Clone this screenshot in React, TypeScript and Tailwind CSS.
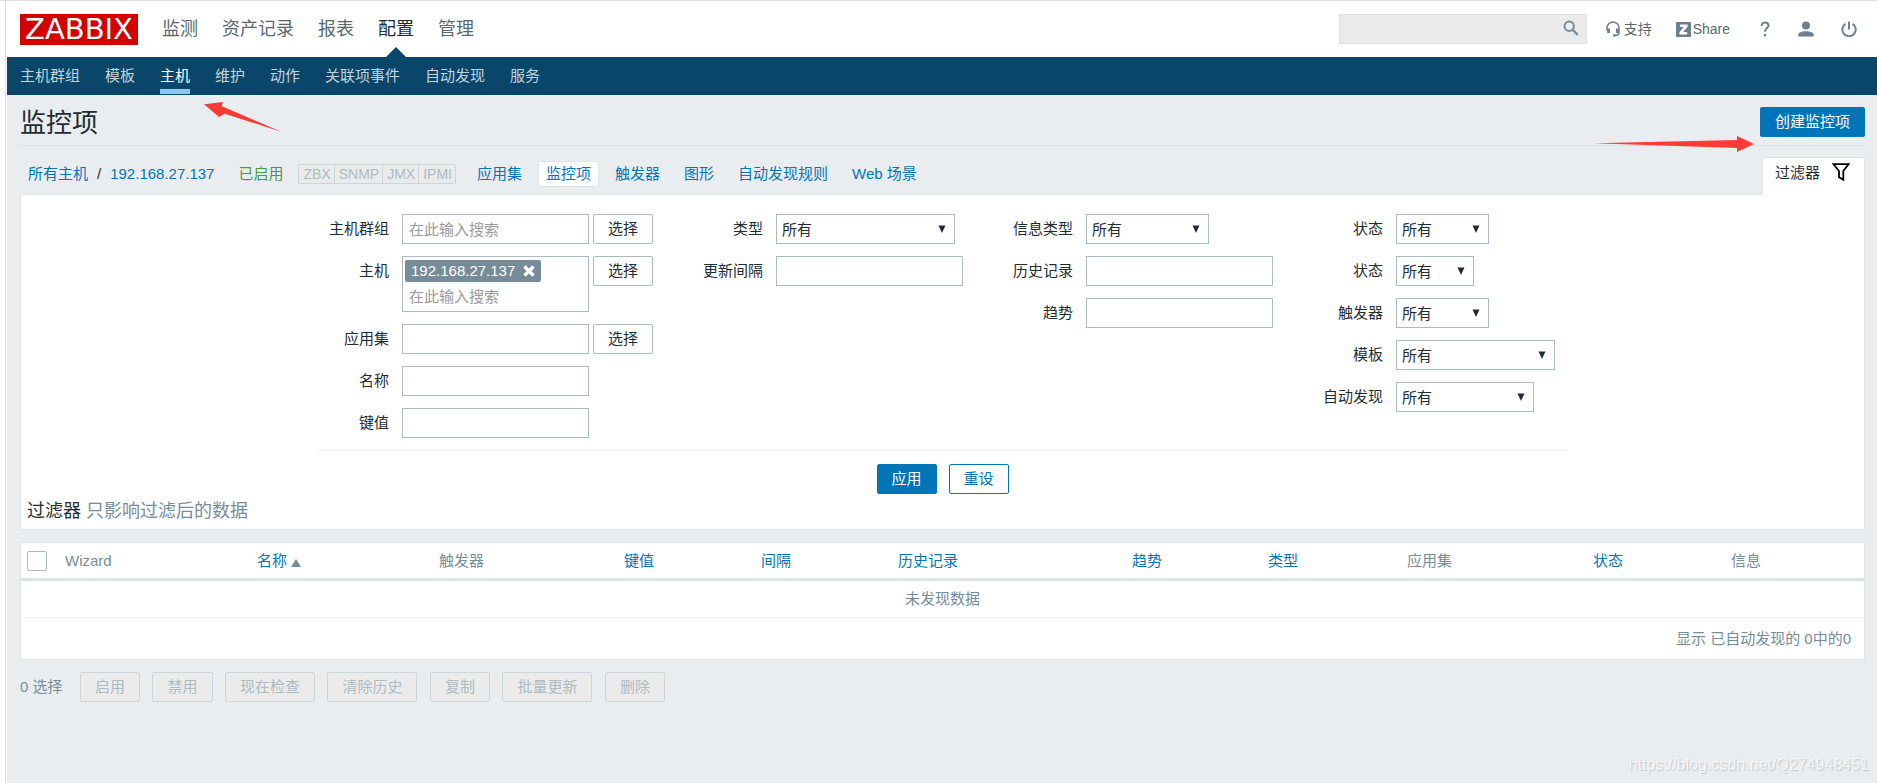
import type { ReactNode } from "react";
import { clsx } from "clsx";

const MAIN_NAV = ["监测", "资产记录", "报表", "配置", "管理"];
const SUB_NAV = ["主机群组", "模板", "主机", "维护", "动作", "关联项事件", "自动发现", "服务"];
const INTERFACES = ["ZBX", "SNMP", "JMX", "IPMI"];
const HOST_TABS = ["应用集", "监控项", "触发器", "图形", "自动发现规则", "Web 场景"];

const COLUMNS = [
  { label: "Wizard",   width: "w-[192px]" },
  { label: "名称",     width: "w-[182px]", sortable: true, sorted: true },
  { label: "触发器",   width: "w-[185px]" },
  { label: "键值",     width: "w-[137px]", sortable: true },
  { label: "间隔",     width: "w-[137px]", sortable: true },
  { label: "历史记录", width: "w-[234px]", sortable: true },
  { label: "趋势",     width: "w-[136px]", sortable: true },
  { label: "类型",     width: "w-[139px]", sortable: true },
  { label: "应用集",   width: "w-[186px]" },
  { label: "状态",     width: "w-[138px]", sortable: true },
  { label: "信息",     width: "w-[139px]" },
];

const STATE_FILTERS = [
  { id: "state",     label: "状态",     width: "w-[93px]" },
  { id: "status",    label: "状态",     width: "w-[78px]" },
  { id: "triggers",  label: "触发器",   width: "w-[93px]" },
  { id: "templates", label: "模板",     width: "w-[159px]" },
  { id: "discovery", label: "自动发现", width: "w-[138px]" },
];

const BULK_ACTIONS = ["启用", "禁用", "现在检查", "清除历史", "复制", "批量更新", "删除"];

function Field({ id, label, children }: { id: string; label: string; children: ReactNode }) {
  return (
    <div className="flex items-start">
      <label htmlFor={id} className="w-[60px] mr-[13px] text-right leading-[30px] shrink-0">{label}</label>
      {children}
    </div>
  );
}

function TextInput({ id, placeholder }: { id: string; placeholder?: string }) {
  return (
    <input
      id={id}
      type="text"
      placeholder={placeholder}
      className="w-[187px] h-[30px] px-1.5 border border-[#acbbc2] bg-white outline-none placeholder:text-[#9a9a9a]"
    />
  );
}

function Select({ id, width }: { id: string; width: string }) {
  return (
    <div className={clsx("relative", width)}>
      <select id={id} className="appearance-none block w-full h-[30px] pl-[5px] pt-[2px] border border-[#acbbc2] bg-white outline-none">
        <option>所有</option>
      </select>
      <svg viewBox="0 0 8 8" className="absolute right-[9px] top-[11px] w-2 h-2 pointer-events-none fill-[#1f2c33]">
        <path d="M0.5 0.5h7L4 8z" />
      </svg>
    </div>
  );
}

function PickButton() {
  return (
    <button type="button" className="w-[60px] h-[30px] ml-1 border border-[#acbbc2] rounded-[2px] bg-white">选择</button>
  );
}

function Header() {
  return (
    <header className="flex items-center h-14 pl-[13px] pr-5 bg-white">
      <a href="#" className="flex items-center justify-center w-[118px] h-[31px] bg-[#d40000] text-white text-[29px] leading-none font-['DejaVu_Sans',sans-serif]">
        ZABBIX
      </a>
      <nav className="flex h-full ml-6 gap-6 text-[18px]">
        {MAIN_NAV.map((item) => (
          <a
            key={item}
            href="#"
            className={clsx("relative flex items-center h-full", item === "配置" ? "text-[#1f2c33]" : "text-[#5a676e]")}
          >
            {item}
            {item === "配置" && (
              <svg viewBox="0 0 20 10" className="absolute bottom-0 left-2 w-5 h-2.5 fill-[#0a466a]">
                <path d="M0 10L10 0l10 10z" />
              </svg>
            )}
          </a>
        ))}
      </nav>

      <div className="flex items-center ml-auto text-[14px] text-[#5a676e]">
        <form className="relative w-[248px] h-[30px]">
          <input type="text" aria-label="搜索" className="w-full h-full pl-2 pr-9 border border-[#e0e0e0] bg-[#ebebeb] outline-none" />
          <button type="button" aria-label="搜索" className="absolute right-2 top-1.5 w-4 h-4">
            <svg viewBox="0 0 16 16" className="w-4 h-4 fill-none stroke-[#768d99]">
              <circle cx="6.2" cy="6.2" r="4.7" strokeWidth="2" />
              <path d="M9.8 9.8l5 5" strokeWidth="2.4" />
            </svg>
          </button>
        </form>
        <a href="#" className="flex items-center ml-[19px] gap-1">
          <svg viewBox="0 0 14 16" className="w-3.5 h-4 fill-none stroke-[#6b808b]">
            <path d="M1 9.5V7a6 6 0 0 1 12 0v4.5c0 1.8-1 2.7-3 2.9" strokeWidth="1.6" />
            <path d="M2.6 7.5v4.6M11.4 7.5v4.6" strokeWidth="2.8" />
            <circle cx="8.5" cy="14.4" r="1.4" className="fill-[#6b808b] stroke-none" />
          </svg>
          支持
        </a>
        <a href="#" className="flex items-center ml-6 gap-[2px]">
          <svg viewBox="0 0 15 15" className="w-[15px] h-[15px]">
            <rect width="15" height="15" rx="1" className="fill-[#6b808b]" />
            <path d="M4.2 2.6h7.4v2.2l-4.4 5.3h4v2.3H3.4v-2.2l4.4-5.3H4.2z" className="fill-white" />
          </svg>
          Share
        </a>
        <a href="#" aria-label="帮助" className="ml-[30px]">
          <svg viewBox="0 0 10 16" className="w-2.5 h-4 fill-none stroke-[#6b808b]">
            <path d="M1.6 5C1.6 2.7 3 1.4 5 1.4S8.5 2.6 8.5 4.6C8.5 7 5 7.3 5 10.8" strokeWidth="2" />
            <path d="M5 13v2.4" strokeWidth="2.4" />
          </svg>
        </a>
        <a href="#" aria-label="用户" className="ml-7">
          <svg viewBox="0 0 16 16" className="w-4 h-4 fill-[#6b808b]">
            <circle cx="8" cy="4.5" r="4" />
            <path d="M0.3 15.5v-2c0-2 3.6-3.3 7.7-3.3s7.7 1.3 7.7 3.3v2z" />
          </svg>
        </a>
        <a href="#" aria-label="退出" className="ml-[27px]">
          <svg viewBox="0 0 16 16" className="w-4 h-4 fill-none stroke-[#6b808b]" strokeWidth="2">
            <path d="M4.4 2.8a6.7 6.7 0 1 0 7.2 0" />
            <path d="M8 0.5v8" />
          </svg>
        </a>
      </div>
    </header>
  );
}

function Filter() {
  return (
    <section className="border border-[#dfe4e7] bg-white">
      <div className="w-[1251px] max-w-full mx-auto">
        <div className="flex gap-[50px] pt-[19px] pb-3 px-3 border-b border-[#ebeef0]">
          <div className="flex flex-col gap-3">
            <Field id="groups" label="主机群组">
              <TextInput id="groups" placeholder="在此输入搜索" />
              <PickButton />
            </Field>
            <Field id="hosts" label="主机">
              <div className="w-[187px] h-14 px-[2px] pt-[3px] border border-[#acbbc2]">
                <span className="flex items-center w-[136px] h-[22px] pl-1.5 rounded-[2px] bg-[#768d99] text-white">
                  192.168.27.137
                  <button type="button" aria-label="移除" className="ml-2">
                    <svg viewBox="0 0 12 12" className="w-3 h-3 stroke-white" strokeWidth="3.4">
                      <path d="M1.5 1.5l9 9M10.5 1.5l-9 9" />
                    </svg>
                  </button>
                </span>
                <input
                  id="hosts"
                  type="text"
                  placeholder="在此输入搜索"
                  className="block w-full h-7 pl-1 outline-none placeholder:text-[#9a9a9a]"
                />
              </div>
              <PickButton />
            </Field>
            <Field id="application" label="应用集">
              <TextInput id="application" />
              <PickButton />
            </Field>
            <Field id="name" label="名称"><TextInput id="name" /></Field>
            <Field id="key" label="键值"><TextInput id="key" /></Field>
          </div>

          <div className="flex flex-col gap-3">
            <Field id="type" label="类型"><Select id="type" width="w-[179px]" /></Field>
            <Field id="delay" label="更新间隔"><TextInput id="delay" /></Field>
          </div>

          <div className="flex flex-col gap-3">
            <Field id="value-type" label="信息类型"><Select id="value-type" width="w-[123px]" /></Field>
            <Field id="history" label="历史记录"><TextInput id="history" /></Field>
            <Field id="trends" label="趋势"><TextInput id="trends" /></Field>
          </div>

          <div className="flex flex-col gap-3">
            {STATE_FILTERS.map((f) => (
              <Field key={f.id} id={f.id} label={f.label}><Select id={f.id} width={f.width} /></Field>
            ))}
          </div>
        </div>
        <div className="flex justify-center gap-3 mt-[13px]">
          <button type="button" className="w-[60px] h-[30px] rounded-[2px] border border-[#0275b8] bg-[#0275b8] text-white">应用</button>
          <button type="button" className="w-[60px] h-[30px] rounded-[2px] border border-[#0275b8] bg-white text-[#0275b8]">重设</button>
        </div>
      </div>
      <p className="px-1.5 pt-1 pb-1 text-[18px] leading-[27px]">
        过滤器 <span className="text-[#768d99]">只影响过滤后的数据</span>
      </p>
    </section>
  );
}

function ItemsTable() {
  return (
    <div className="mt-3 border border-[#dfe4e7] bg-white text-[#768d99]">
      <table className="w-full table-fixed border-separate border-spacing-0">
        <thead>
          <tr className="h-[38px]">
            <th className="w-[38px] pl-1.5 border-b-3 border-[#dce1e4]">
              <input
                type="checkbox"
                aria-label="全选"
                className="appearance-none block w-5 h-5 border border-[#acbbc2] rounded-[2px] bg-white"
              />
            </th>
            {COLUMNS.map((col) => (
              <th key={col.label} className={clsx("px-1.5 text-left font-normal border-b-3 border-[#dce1e4]", col.width)}>
                {col.sortable ? (
                  <a href="#" className="inline-flex items-center gap-1 text-[#0275b8]">
                    {col.label}
                    {col.sorted && (
                      <svg viewBox="0 0 10 8" className="w-2.5 h-2 mt-1 fill-[#768d99]">
                        <path d="M0 8l5-8 5 8z" />
                      </svg>
                    )}
                  </a>
                ) : (
                  col.label
                )}
              </th>
            ))}
          </tr>
        </thead>
        <tbody>
          <tr className="h-[37px]">
            <td colSpan={COLUMNS.length + 1} className="text-center border-b border-[#ebeef0]">未发现数据</td>
          </tr>
        </tbody>
      </table>
      <div className="h-[41px] pr-[13px] leading-[41px] text-right">显示 已自动发现的 0中的0</div>
    </div>
  );
}

export default function App() {
  return (
    <div className="relative min-h-screen flex flex-col pl-[5px] bg-white border-t border-[#dedede] text-[15px] leading-[20px] text-[#1f2c33] font-['Liberation_Sans','Noto_Sans_CJK_SC',sans-serif]">
      <div className="flex-1 flex flex-col pl-px border-l border-[#dedede]">
        <Header />

        <nav className="flex h-[38px] pl-[13px] gap-[25px] bg-[#0a466a] text-[#c3d3dc]">
          {SUB_NAV.map((item) => (
            <a
              key={item}
              href="#"
              className={clsx(
                "h-[37px] pt-[9px] border-b-5",
                item === "主机" ? "border-[#87c9f4] text-white" : "border-transparent"
              )}
            >
              {item}
            </a>
          ))}
        </nav>

        <main className="flex-1 pl-[13px] pr-3 bg-[#e9edf0]">
          <div className="flex items-start justify-between pt-3 pb-2 border-b border-[#dce2e5]">
            <h1 className="text-[26px] leading-8 -mb-2">监控项</h1>
            <button type="button" className="w-[105px] h-[30px] rounded-[2px] bg-[#0275b8] text-white">创建监控项</button>
          </div>

          <div className="flex items-end justify-between h-12">
            <div className="flex items-center h-10 pl-2 text-[#0275b8]">
              <a href="#">所有主机</a>
              <span className="mx-[9px] text-[#1f2c33]">/</span>
              <a href="#">192.168.27.137</a>
              <span className="ml-6 text-[#429e47]">已启用</span>
              <div className="flex ml-[15px] mr-[13px] border border-[#ccd5d9] rounded-[2px] bg-[#ebebeb] text-[14px] leading-[18px] text-[#acbbc2] divide-x divide-[#ccd5d9]">
                {INTERFACES.map((name) => <span key={name} className="pl-1 pr-[3px]">{name}</span>)}
              </div>
              {HOST_TABS.map((tab) => (
                <a
                  key={tab}
                  href="#"
                  className={clsx(
                    "mr-2 px-[7px] py-[2px] border rounded-[2px]",
                    tab === "监控项" ? "border-[#dfe4e7] bg-white" : "border-transparent"
                  )}
                >
                  {tab}
                </a>
              ))}
            </div>
            <button
              type="button"
              className="relative flex items-start h-[38px] -mb-px pt-[5px] pl-3 pr-[14px] gap-3 border border-b-0 border-[#dfe4e7] rounded-t-[2px] bg-white"
            >
              过滤器
              <svg viewBox="0 0 18 18" className="w-[18px] h-[18px] fill-none stroke-black" strokeWidth="1.8">
                <path d="M1.5 1.2h15L11.3 8v8.8L7 14.2V8z" />
              </svg>
            </button>
          </div>

          <Filter />
          <ItemsTable />

          <div className="flex items-center mt-3 text-[#768d99]">
            <span className="w-[60px]">0 选择</span>
            <div className="flex justify-between w-[585px]">
              {BULK_ACTIONS.map((action) => (
                <button
                  key={action}
                  type="button"
                  disabled
                  className="h-[30px] px-3.5 border border-[#ccd5d9] rounded-[2px] bg-[#ebebeb] text-[#acbbc2]"
                >
                  {action}
                </button>
              ))}
            </div>
          </div>
        </main>
      </div>

      {/* Callout arrows */}
      <svg viewBox="0 0 78 30" className="absolute left-[204px] top-[101px] w-[78px] h-[30px] fill-[#fc3b36] pointer-events-none">
        <path d="M0 2.3L19 0l-1.5 4L77 29.7 20.5 11.7 15 15z" />
      </svg>
      <svg viewBox="0 0 160 16" className="absolute right-[123px] top-[135px] w-40 h-4 fill-[#fc3b36] pointer-events-none">
        <path d="M0 7.2L143 4V0l17 8-17 8v-4z" />
      </svg>

      <span className="absolute right-2 bottom-2 text-[16px] text-white/70 [text-shadow:1px_1px_1px_#c3c7ca] pointer-events-none">
        https://blog.csdn.net/Q274948451
      </span>
    </div>
  );
}
